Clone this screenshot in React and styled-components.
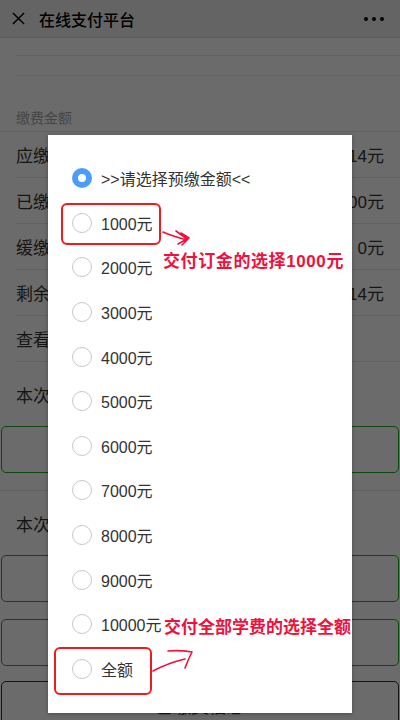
import React from "react";
import styled, { createGlobalStyle } from "styled-components";

const FONT = `"Liberation Sans", "Noto Sans CJK SC", sans-serif`;

const GlobalStyle = createGlobalStyle`
  html, body {
    margin: 0;
    padding: 0;
    height: 720px;
    overflow: hidden;
    background: #fff;
    font-family: ${FONT};
  }
`;

const OPTIONS = [
  "1000元",
  "2000元",
  "3000元",
  "4000元",
  "5000元",
  "6000元",
  "7000元",
  "8000元",
  "9000元",
  "10000元",
  "全额",
];

const ROWS = [
  { label: "应缴总额", value: "21514元" },
  { label: "已缴金额", value: "2100元" },
  { label: "缓缴金额", value: "0元" },
  { label: "剩余金额", value: "19414元" },
];

const App = () => {
  return (
    <StyledScreen>
      <GlobalStyle />
      <StyledHeader>
        <StyledClose viewBox="0 0 14 14">
          <path d="M1 1 L13 13 M13 1 L1 13" />
        </StyledClose>
        <StyledTitle>在线支付平台</StyledTitle>
        <StyledMore>
          <span />
          <span />
          <span />
        </StyledMore>
      </StyledHeader>
      <StyledStrip />
      <StyledBlank />
      <StyledSection>缴费金额</StyledSection>
      {ROWS.map((r) => (
        <StyledRow key={r.label}>
          <span>{r.label}</span>
          <span>{r.value}</span>
        </StyledRow>
      ))}
      <StyledRow>
        <span>查看明细</span>
      </StyledRow>
      <StyledBlock>
        <StyledBlockLabel>本次</StyledBlockLabel>
        <StyledInput />
      </StyledBlock>
      <StyledBlock>
        <StyledBlockLabel>本次</StyledBlockLabel>
        <StyledInput />
        <StyledInput />
        <StyledButton>已缴费信息</StyledButton>
      </StyledBlock>

      <StyledMask />
      <StyledDialog>
        <StyledOption>
          <StyledRadio checked />
          <StyledOptionText>&gt;&gt;请选择预缴金额&lt;&lt;</StyledOptionText>
        </StyledOption>
        {OPTIONS.map((o) => (
          <StyledOption key={o}>
            <StyledRadio />
            <StyledOptionText>{o}</StyledOptionText>
          </StyledOption>
        ))}
      </StyledDialog>

      <StyledMark $left={61} $top={203} $width={100} $height={42} />
      <StyledMark $left={54} $top={647} $width={98} $height={48} />
      <StyledNote $left={163} $top={250} $spacing={0.6}>
        交付订金的选择1000元
      </StyledNote>
      <StyledNote $left={164} $top={616}>交付全部学费的选择全额</StyledNote>
      <StyledArrow viewBox="0 0 400 720">
        <path d="M163 232 Q172 236 187 240 M176 231 L187 239 L178 244 M181 233 L189 238 L182 245" />
        <path d="M153 671 Q168 663 185 659 M168 651 Q180 650 192 652 Q188 660 185 668" />
      </StyledArrow>
    </StyledScreen>
  );
};
export default App;

const StyledScreen = styled.div`
  position: relative;
  width: 400px;
  height: 720px;
  overflow: hidden;
  background: #fff;
  color: #333;
`;
const StyledHeader = styled.div`
  display: flex;
  align-items: center;
  height: 38px;
  padding: 0 16px 0 12px;
  background: #eeeeee;
  border-bottom: 1px solid #dcdcdc;
  box-sizing: border-box;
`;
const StyledClose = styled.svg`
  width: 13px;
  height: 13px;
  fill: none;
  stroke: #000;
  stroke-width: 1.6;
`;
const StyledTitle = styled.div`
  margin-left: 14px;
  font-size: 16px;
  font-weight: 500;
  color: #000;
  flex: 1;
`;
const StyledMore = styled.div`
  display: flex;
  gap: 4px;
  span {
    width: 4px;
    height: 4px;
    border-radius: 50%;
    background: #000;
  }
`;
const StyledStrip = styled.div`
  height: 17px;
  margin-left: 16px;
  border-bottom: 1px solid #e6e6e6;
`;
const StyledBlank = styled.div`
  height: 19px;
  margin-left: 16px;
  border-bottom: 1px solid #f0f0f0;
`;
const StyledSection = styled.div`
  height: 56px;
  padding: 0 16px 4px;
  display: flex;
  align-items: flex-end;
  font-size: 14px;
  color: #a8a8a8;
  box-sizing: border-box;
  border-bottom: 1px solid #e6e6e6;
`;
const StyledRow = styled.div`
  display: flex;
  justify-content: space-between;
  align-items: center;
  height: 46px;
  margin-left: 16px;
  padding-right: 16px;
  font-size: 17px;
  color: #333;
  border-bottom: 1px solid #e6e6e6;
  box-sizing: border-box;
`;
const StyledBlock = styled.div`
  display: flex;
  flex-direction: column;
  gap: 17px;
  padding: 20px 1px 17px;
  border-bottom: 1px solid #e6e6e6;
`;
const StyledBlockLabel = styled.div`
  padding: 0 15px;
  font-size: 17px;
  color: #333;
  margin-bottom: 2px;
`;
const StyledInput = styled.div`
  height: 47px;
  border: 1px solid #2aa52a;
  border-radius: 5px;
  box-sizing: border-box;
`;
const StyledButton = styled.div`
  height: 52px;
  border: 1px solid #333;
  border-radius: 5px;
  display: flex;
  align-items: flex-end;
  justify-content: center;
  padding-bottom: 14px;
  box-sizing: border-box;
  font-size: 18px;
  color: #333;
  margin-top: -2px;
`;
const StyledMask = styled.div`
  position: absolute;
  inset: 0;
  background: rgba(0, 0, 0, 0.58);
`;
const StyledDialog = styled.div`
  position: absolute;
  left: 48px;
  top: 135px;
  width: 304px;
  padding: 21px 0 22px 24px;
  box-sizing: border-box;
  background: #fff;
  box-shadow: 0 1px 4px rgba(0, 0, 0, 0.3);
`;
const StyledOption = styled.div`
  display: flex;
  align-items: center;
  height: 44.6px;
`;
const StyledRadio = styled.span`
  width: 20px;
  height: 20px;
  border-radius: 50%;
  box-sizing: border-box;
  border: ${(p) => (p.checked ? "6px solid #4a9df8" : "1.5px solid #c8c8c8")};
  background: #fff;
`;
const StyledOptionText = styled.span`
  margin-left: 9px;
  font-size: 16px;
  color: #333;
`;
const StyledMark = styled.div`
  position: absolute;
  left: ${(p) => p.$left}px;
  top: ${(p) => p.$top}px;
  width: ${(p) => p.$width}px;
  height: ${(p) => p.$height}px;
  border: 2px solid #f21b1b;
  border-radius: 6px;
  box-sizing: border-box;
`;
const StyledNote = styled.div`
  position: absolute;
  left: ${(p) => p.$left}px;
  top: ${(p) => p.$top}px;
  font-size: 17px;
  font-weight: bold;
  letter-spacing: ${(p) => p.$spacing || 0}px;
  color: #f0103c;
  line-height: 24px;
  white-space: nowrap;
`;
const StyledArrow = styled.svg`
  position: absolute;
  inset: 0;
  width: 400px;
  height: 720px;
  fill: none;
  stroke: #f0103c;
  stroke-width: 1.6;
  stroke-linecap: round;
  stroke-linejoin: round;
  pointer-events: none;
`;
